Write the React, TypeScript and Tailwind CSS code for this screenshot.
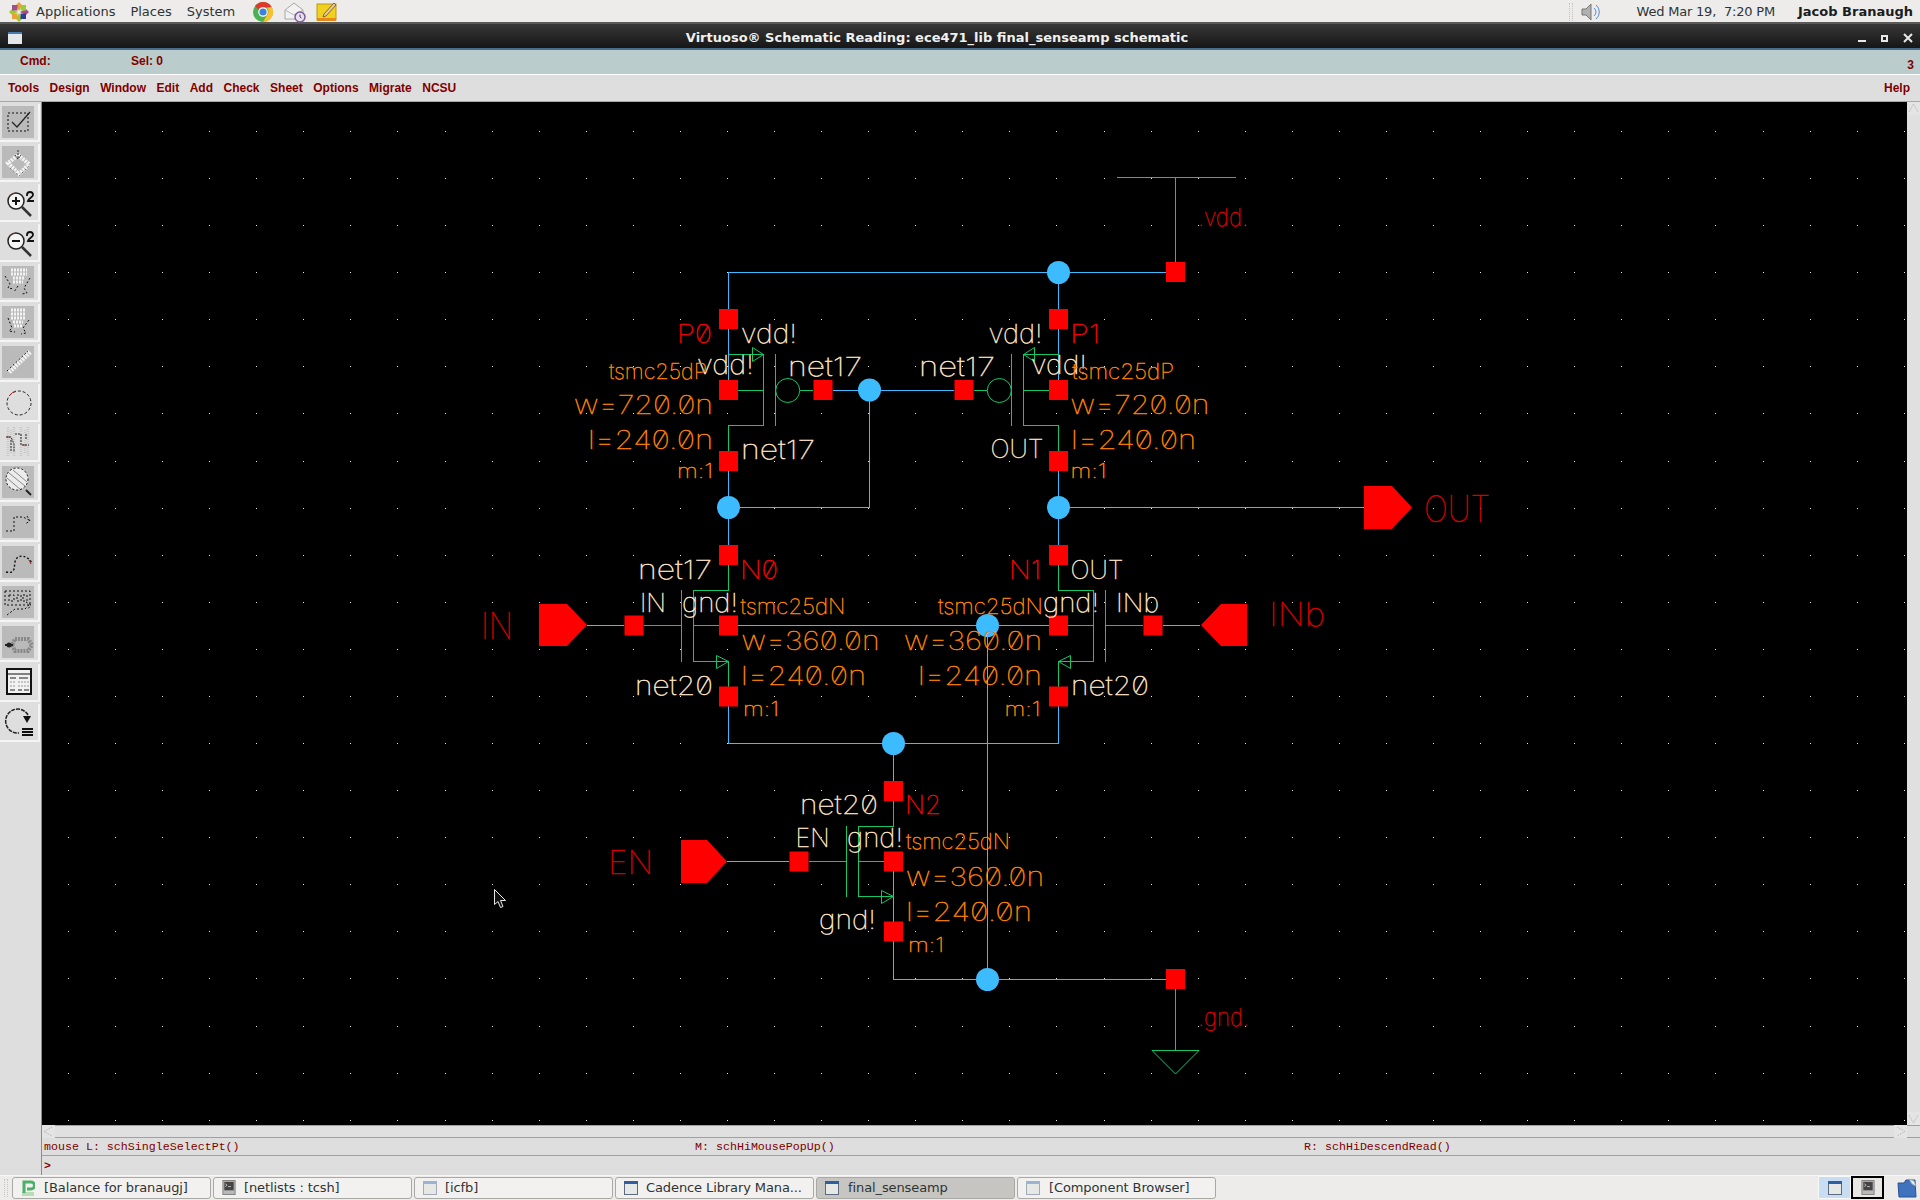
import type { ReactNode } from "react";

const BLUE = "#3cbcff";
const GREEN = "#10c868";
const RED = "#ff0000";
const PIN = "#d80000";
const CREAM = "#ffe4c4";
const ORANGE = "#ff8000";

// page coordinates; the svg viewBox starts at the canvas origin
const blueWires = [
  "728.5,309 728.5,272.5 1166,272.5",
  "1058.5,272.5 1058.5,309",
  "728.5,329 728.5,380",
  "1058.5,329 1058.5,380",
  "728.5,471 728.5,545",
  "1058.5,471 1058.5,545",
  "833,390.5 954,390.5",
  "869.5,390 869.5,507.5 728.5,507.5",
  "1058.5,507.5 1364,507.5",
  "738,625.5 1049,625.5",
  "1163,625.5 1200,625.5",
  "587,625.5 624,625.5",
  "728.5,706 728.5,743.5 1058.5,743.5 1058.5,706",
  "893.5,743 893.5,781",
  "987.5,625 987.5,979",
  "893.5,871 893.5,922",
  "893.5,941 893.5,979.5 1166,979.5",
  "727,861.5 789,861.5",
];

const greenWires = [
  // vdd / gnd stubs
  "1175.5,263 1175.5,177",
  "1117,177.5 1236,177.5",
  "1175.5,989 1175.5,1050",
  // P0
  "728.5,354.5 763.5,354.5 763.5,425.5 728.5,425.5 728.5,451",
  "738,390.5 763.5,390.5",
  "775.5,354 775.5,426",
  "800,390.5 813,390.5",
  // P1
  "1058.5,354.5 1023.5,354.5 1023.5,425.5 1058.5,425.5 1058.5,451",
  "1049,390.5 1023.5,390.5",
  "1011.5,354 1011.5,426",
  "974,390.5 987,390.5",
  // N0
  "728.5,565 728.5,590.5 693.5,590.5 693.5,661.5 728.5,661.5 728.5,687",
  "693.5,625.5 719,625.5",
  "681.5,590 681.5,662",
  "644,625.5 681.5,625.5",
  // N1
  "1058.5,565 1058.5,590.5 1093.5,590.5 1093.5,661.5 1058.5,661.5 1058.5,687",
  "1093.5,625.5 1068,625.5",
  "1105.5,590 1105.5,662",
  "1143,625.5 1105.5,625.5",
  // N2
  "893.5,801 893.5,826.5 858.5,826.5 858.5,896.5 893.5,896.5",
  "858.5,861.5 884,861.5",
  "846.5,826 846.5,897",
  "809,861.5 846.5,861.5",
];

const arrows = [
  "752.5,347.5 763.5,354.5 752.5,361.5",
  "1034.5,347.5 1023.5,354.5 1034.5,361.5",
  "716.5,655.5 728.5,661.5 716.5,668.5",
  "1070.5,655.5 1058.5,661.5 1070.5,668.5",
  "881.5,890.5 893.5,896.5 881.5,903.5",
  "1152,1050.5 1199,1050.5 1175.5,1074",
];

const squares = [
  [1175.5, 272], [728.5, 319], [728.5, 390], [728.5, 461], [823, 390], [964, 390],
  [1058.5, 319], [1058.5, 390], [1058.5, 461], [728.5, 555], [728.5, 625.5], [728.5, 696.5],
  [634, 625.5], [1058.5, 555], [1058.5, 625.5], [1058.5, 696.5], [1153, 625.5],
  [893.5, 791], [893.5, 861.5], [893.5, 931.5], [799, 861.5], [1175.5, 979],
];

const junctions = [
  [1058.5, 272.5], [869.5, 390], [728.5, 507.5], [1058.5, 507.5],
  [987.5, 625.5], [893.5, 743.5], [987.5, 979.5],
];

const pins = [
  "539,604 567,604 587,625 567,646 539,646",
  "1364,486 1392,486 1412,507.5 1392,529 1364,529",
  "1247,604 1221,604 1201,625 1221,646 1247,646",
  "681,840 707,840 727,861.5 707,883 681,883",
];

// text, x, baseline, width, font size, colour
const labels: [string, number, number, number, number, string][] = [
  [".vdd.", 1198, 226, 50, 24, PIN],
  [".gnd.", 1198, 1026, 51, 24, PIN],
  ["OUT", 1424, 522, 66, 36, PIN],
  ["IN", 481, 639, 32, 36, PIN],
  ["INb", 1269, 626, 56, 33, PIN],
  ["EN", 608, 874, 45, 33, PIN],

  ["P0", 677, 342.7, 35, 26, RED],
  ["P1", 1070, 342.7, 30, 26, RED],
  ["N0", 740, 579, 38, 26, RED],
  ["N1", 1009, 579, 32, 26, RED],
  ["N2", 905, 814.3, 36, 26, RED],

  ["vdd!", 741, 342.7, 56, 26, CREAM],
  ["vdd!", 697, 374, 57, 26, CREAM],
  ["net17", 788, 376, 74, 26, CREAM],
  ["net17", 919, 376, 76, 26, CREAM],
  ["net17", 741, 459, 74, 26, CREAM],
  ["vdd!", 988.5, 342.7, 54, 26, CREAM],
  ["vdd!", 1031, 374, 56, 26, CREAM],
  ["OUT", 990.5, 458.3, 53, 26, CREAM],
  ["net17", 638, 579, 74, 26, CREAM],
  ["IN", 640, 611.7, 26, 26, CREAM],
  ["gnd!", 682, 611.7, 56, 26, CREAM],
  ["net20", 635, 694.7, 78, 26, CREAM],
  ["OUT", 1070.5, 579, 53, 26, CREAM],
  ["gnd!", 1043, 611.7, 56, 26, CREAM],
  ["INb", 1116, 611.7, 43, 26, CREAM],
  ["net20", 1071, 694.7, 78, 26, CREAM],
  ["net20", 800, 814.3, 78, 26, CREAM],
  ["EN", 795.5, 847.3, 34, 26, CREAM],
  ["gnd!", 847, 847.3, 56, 26, CREAM],
  ["gnd!", 819, 929, 57, 26, CREAM],

  ["tsmc25dP", 609, 379, 98, 21, ORANGE],
  ["w=720.0n", 574, 414, 139, 26, ORANGE],
  ["l=240.0n", 588, 449.3, 125, 26, ORANGE],
  ["m:1", 677, 478.3, 36, 20, ORANGE],
  ["tsmc25dP", 1072, 379, 102, 21, ORANGE],
  ["w=720.0n", 1070.5, 414, 139, 26, ORANGE],
  ["l=240.0n", 1071, 449.3, 125, 26, ORANGE],
  ["m:1", 1070.5, 478.3, 36, 20, ORANGE],
  ["tsmc25dN", 740.5, 613.7, 105, 21, ORANGE],
  ["w=360.0n", 741.5, 650, 138, 26, ORANGE],
  ["l=240.0n", 741, 685, 125, 26, ORANGE],
  ["m:1", 743, 716, 36, 20, ORANGE],
  ["tsmc25dN", 938, 613.7, 105, 21, ORANGE],
  ["w=360.0n", 904, 650, 138, 26, ORANGE],
  ["l=240.0n", 918, 685, 124, 26, ORANGE],
  ["m:1", 1004.5, 716, 36, 20, ORANGE],
  ["tsmc25dN", 906, 849.3, 104, 21, ORANGE],
  ["w=360.0n", 906, 886, 138, 26, ORANGE],
  ["l=240.0n", 906, 921, 126, 26, ORANGE],
  ["m:1", 908, 951.7, 36, 20, ORANGE],
];

const gridX = Array.from({ length: 40 }, (_, i) => Math.round(68 + i * 47.07));
const gridY = Array.from({ length: 22 }, (_, i) => Math.round(131 + i * 47.08));

function Schematic() {
  return (
    <svg viewBox="42 102 1865 1023" className="block h-[1023px] w-[1865px] bg-black">
      {gridX.map((x) =>
        gridY.map((y) => <rect key={`${x}-${y}`} x={x} y={y} width={1} height={1} fill="#e8e8e8" />),
      )}
      <g fill="none" strokeWidth={1} shapeRendering="crispEdges">
        {blueWires.map((p) => (
          <polyline key={p} points={p} stroke={BLUE} />
        ))}
        {greenWires.map((p) => (
          <polyline key={p} points={p} stroke={GREEN} />
        ))}
      </g>
      <g fill="none" stroke={GREEN}>
        {arrows.map((p) => (
          <polygon key={p} points={p} />
        ))}
        <circle cx={787.7} cy={390.5} r={12} />
        <circle cx={999.3} cy={390.5} r={12} />
      </g>
      {pins.map((p) => (
        <polygon key={p} points={p} fill={RED} />
      ))}
      {squares.map(([x, y]) => (
        <rect key={`${x}-${y}`} x={x - 9.5} y={y - 10} width={19} height={20} fill={RED} />
      ))}
      {junctions.map(([x, y]) => (
        <circle key={`${x}-${y}`} cx={x} cy={y} r={11.5} fill={BLUE} />
      ))}
      <g className="font-['Inter'] font-thin [font-feature-settings:'zero']">
        {labels.map(([t, x, y, w, size, color]) => (
          <text
            key={`${t}-${x}-${y}`}
            x={x}
            y={y}
            fontSize={size}
            fill={color}
            stroke={color}
            strokeWidth={0.45}
            textLength={w}
            lengthAdjust="spacingAndGlyphs"
          >
            {t}
          </text>
        ))}
      </g>
      <path d="M494.5 889.5v15l3.5-3 2.5 6 2.5-1-2.5-6h5z" fill="#111" stroke="#e8e8e8" />
    </svg>
  );
}

function CentosLogo() {
  return (
    <svg viewBox="0 0 22 22" className="h-[22px] w-[22px]">
      <path d="M11 1l3 3-3 6-3-6z" fill="#e9a23b" />
      <path d="M21 11l-3 3-6-3 6-3z" fill="#a14f8c" />
      <path d="M11 21l-3-3 3-6 3 6z" fill="#9ccd2a" />
      <path d="M1 11l3-3 6 3-6 3z" fill="#9ccd2a" />
      <rect x="4" y="4" width="5.5" height="5.5" fill="#a14f8c" />
      <rect x="12.5" y="4" width="5.5" height="5.5" fill="#9ccd2a" />
      <rect x="4" y="12.5" width="5.5" height="5.5" fill="#e9a23b" />
      <rect x="12.5" y="12.5" width="5.5" height="5.5" fill="#2f3f8f" />
    </svg>
  );
}

function ChromeIcon() {
  return (
    <svg viewBox="0 0 22 22" className="h-[22px] w-[22px]">
      <circle cx="11" cy="11" r="10" fill="#4caf50" />
      <path d="M11 1a10 10 0 0 1 8.7 5H11a5 5 0 0 0-4.6 3L3.2 4.8A10 10 0 0 1 11 1z" fill="#e0392b" />
      <path d="M19.7 6A10 10 0 0 1 11 21l4.3-7.5A5 5 0 0 0 15 7z" fill="#fbc02d" />
      <circle cx="11" cy="11" r="4.8" fill="#fff" />
      <circle cx="11" cy="11" r="3.6" fill="#3f80d8" />
    </svg>
  );
}

function MailClockIcon() {
  return (
    <svg viewBox="0 0 22 22" className="h-[22px] w-[22px]">
      <path d="M1 9l9-7 9 7v9H1z" fill="#f2f2f2" stroke="#a8a8a8" />
      <path d="M1 9l9 5 9-5" fill="none" stroke="#b8b8b8" />
      <circle cx="16" cy="16" r="5" fill="#e8e0ee" stroke="#7d5a96" strokeWidth="1.5" />
      <path d="M16 13.5V16l1.5 1" fill="none" stroke="#55406a" />
    </svg>
  );
}

function NoteIcon() {
  return (
    <svg viewBox="0 0 22 22" className="h-[22px] w-[22px]">
      <rect x="1" y="3" width="19" height="16" fill="#f0d21e" stroke="#b89a10" />
      <rect x="1" y="17" width="19" height="3" fill="#e58a1a" />
      <path d="M8 13l10-11 2 2-10 11-3 1z" fill="#e8c9a0" stroke="#6b4a22" strokeWidth="0.8" />
    </svg>
  );
}

function WindowIcon({ active = false, className = "" }: { active?: boolean; className?: string }) {
  return (
    <svg viewBox="0 0 14 14" className={`h-[14px] w-[14px] ${className}`}>
      <rect x="0.5" y="0.5" width="13" height="13" fill="#e6e8e6" stroke={active ? "#5b6a80" : "#a0aab8"} />
      <rect x="0" y="0" width="14" height="3" fill={active ? "#2f5f9f" : "#9cb4d4"} />
    </svg>
  );
}

function TerminalIcon() {
  return (
    <svg viewBox="0 0 14 16" className="h-[15px] w-[14px]">
      <rect x="0.5" y="0.5" width="13" height="15" fill="#b8b8b8" stroke="#808080" />
      <rect x="2" y="2" width="10" height="9" fill="#444" />
      <path d="M3 4l2 1.5L3 7M6 7h3" fill="none" stroke="#ddd" strokeWidth="0.8" />
    </svg>
  );
}

function BalanceIcon() {
  return (
    <svg viewBox="0 0 14 16" className="h-[16px] w-[14px]">
      <rect x="1" y="12" width="12" height="4" fill="#b6dcb8" />
      <path d="M3 13V2h7a3 3 0 0 1 0 7H6" fill="none" stroke="#4caf6a" strokeWidth="3" />
    </svg>
  );
}

const TASKS: { title: string; icon: ReactNode; active?: boolean; gap: string }[] = [
  { title: "[Balance for branaugj]", icon: <BalanceIcon />, gap: "gap-[9px]" },
  { title: "[netlists : tcsh]", icon: <TerminalIcon />, gap: "gap-[8px]" },
  { title: "[icfb]", icon: <WindowIcon />, gap: "gap-[8px]" },
  { title: "Cadence Library Mana...", icon: <WindowIcon active />, gap: "gap-[8px]" },
  { title: "final_senseamp", icon: <WindowIcon active />, active: true, gap: "gap-[9px]" },
  { title: "[Component Browser]", icon: <WindowIcon />, gap: "gap-[9px]" },
];

const MENUS = ["Tools", "Design", "Window", "Edit", "Add", "Check", "Sheet", "Options", "Migrate", "NCSU"];

const dash = { fill: "none", stroke: "#111", strokeDasharray: "2 2" };
const hatch = { fill: "none", stroke: "#f4f4f4", strokeDasharray: "2 1", strokeWidth: 1.5 };

function Magnifier({ minus = false }: { minus?: boolean }) {
  return (
    <>
      <circle cx="14" cy="15" r="8" fill="#f4f4f4" stroke="#222" strokeWidth="1.5" />
      <path d="M8 10a8 8 0 0 1 6-3" fill="none" stroke="#a02020" />
      <path d="M10 15h8" stroke="#111" strokeWidth="2" />
      {!minus && <path d="M14 11v8" stroke="#111" strokeWidth="2" />}
      <path d="M20 21l9 9" stroke="#333" strokeWidth="2.5" />
      <path d="M25 10V9a3 3 0 1 1 6 0c0 2-4 3-5 6h6" fill="none" stroke="#111" strokeWidth="1.8" />
    </>
  );
}

const TOOLS: { gray: boolean; icon: ReactNode }[] = [
  {
    gray: true,
    icon: (
      <>
        <rect x="6" y="7" width="20" height="18" {...dash} />
        <path d="M10 16l5 5 13-15" fill="none" stroke="#222" strokeWidth="1.2" />
      </>
    ),
  },
  {
    gray: true,
    icon: (
      <>
        <path d="M16 9l11 9-10 10L6 17z" {...hatch} strokeWidth={4} />
        <path d="M16 4v8M13 9l3 4 3-4" fill="none" stroke="#333" strokeDasharray="2 1" />
        <path d="M8 22l9 8 11-11" {...dash} stroke="#777" />
      </>
    ),
  },
  { gray: false, icon: <Magnifier /> },
  { gray: false, icon: <Magnifier minus /> },
  {
    gray: true,
    icon: (
      <>
        <path d="M9 4h16M9 8h16M11 12h12M11 16h10" {...hatch} strokeWidth={3} />
        <path d="M3 10l5 8-2 4 6 1M28 12l-6 10 3 5-5 1M16 20l-4 6" {...dash} />
      </>
    ),
  },
  {
    gray: true,
    icon: (
      <>
        <path d="M9 4h14M9 8h14M9 12h14M11 16h10M12 20h8" {...hatch} strokeWidth={3} />
        <path d="M6 12l4 10-3 3 6 1M27 14l-6 8 3 5-5 1" {...dash} />
      </>
    ),
  },
  {
    gray: true,
    icon: (
      <>
        <path d="M7 26L28 6" stroke="#f4f4f4" strokeWidth="5" strokeDasharray="2 1" />
        <path d="M5 25l21-20" {...dash} />
      </>
    ),
  },
  {
    gray: false,
    icon: (
      <>
        <circle cx="17" cy="17" r="12" fill="none" stroke="#222" strokeDasharray="3 2" />
        <path d="M8 9a12 12 0 0 1 6-4" fill="none" stroke="#a02020" />
      </>
    ),
  },
  {
    gray: false,
    icon: (
      <>
        <path d="M6 1v30M12 1v30M19 1v30M26 1v30M9 4v24M23 4v24" fill="none" stroke="#c8c8c8" strokeWidth="2.5" strokeDasharray="1 1" />
        <path d="M4 11h5l3 7v8M13 8h6v11M20 19h7M24 8v5M9 14v12" fill="none" stroke="#222" strokeDasharray="2 1" />
        <path d="M5 11h3M21 19h3" stroke="#a02020" />
      </>
    ),
  },
  {
    gray: true,
    icon: (
      <>
        <circle cx="15" cy="13" r="11" fill="#ececec" />
        <path d="M7 7l16 13M5 12l14 12M11 4l14 12" stroke="#888" />
        <circle cx="15" cy="13" r="11" {...dash} />
        <path d="M24 24l5 5" stroke="#222" strokeWidth="2" />
      </>
    ),
  },
  {
    gray: true,
    icon: <path d="M4 25h8V11h9l8 4M25 10l3 5-5 3" {...dash} />,
  },
  {
    gray: true,
    icon: (
      <>
        <path d="M4 26c5 1 7 0 8-3s0-8 3-11 10-3 15 5" {...dash} strokeWidth={1.4} />
        <path d="M27 14l2 4" stroke="#a02020" />
      </>
    ),
  },
  {
    gray: true,
    icon: (
      <>
        <rect x="3" y="5" width="25" height="14" {...dash} />
        <path d="M7 9h5v6H7zM15 9h4v6h-4zM21 9h4v6h-4z" {...dash} />
        <path d="M5 29l8-6h10l5-5M24 16l5 3-3 4" {...dash} />
      </>
    ),
  },
  {
    gray: true,
    icon: (
      <>
        <path d="M13 13h13l4 6-4 6H13l-3-6z" fill="none" stroke="#888" strokeDasharray="2 1" strokeWidth="4" />
        <path d="M3 19h3M9 19h2" stroke="#222" strokeWidth="2" />
        <circle cx="7" cy="19" r="2.5" fill="#222" />
      </>
    ),
  },
  {
    gray: false,
    icon: (
      <>
        <rect x="5" y="3" width="24" height="25" fill="#f2f2f2" stroke="#111" strokeWidth="2" />
        <path d="M5 8h24" stroke="#111" />
        <path d="M8 12h6M17 12h9M8 24h5M16 24h4M22 24h5" stroke="#888" strokeWidth="2" />
        <path d="M8 16h5M16 16h11M8 20h5M16 20h11" stroke="#999" strokeDasharray="2 1" />
      </>
    ),
  },
  {
    gray: false,
    icon: (
      <>
        <path d="M26 9A12 12 0 1 0 17 27" fill="none" stroke="#222" strokeWidth="1.5" strokeDasharray="4 1" />
        <path d="M21 10h8l-4 7z" fill="#111" />
        <path d="M20 23h11M20 26h11M20 29h11" stroke="#111" strokeWidth="2" />
      </>
    ),
  },
];

function ToolButton({ gray, children }: { gray: boolean; children: ReactNode }) {
  return (
    <div className="flex h-[38px] w-[40px] items-center justify-center border-b-2 border-r-2 border-[#f4f4f4] bg-[#dedede] pr-[3px]">
      <div className={`h-[32px] w-[32px] ${gray ? "bg-[#bababa]" : ""}`}>
        <svg viewBox="0 0 32 32" className="block h-[32px] w-[32px]">
          {children}
        </svg>
      </div>
    </div>
  );
}

function ScrollArrow({ dir }: { dir: "up" | "down" | "left" | "right" }) {
  const d = { up: "M2 10L6.5 2 11 10", down: "M2 3l4.5 8L11 3", left: "M10 2L2 6.5l8 4.5", right: "M3 2l8 4.5L3 11" }[dir];
  return (
    <svg viewBox="0 0 13 13" className="block h-[13px] w-[13px] bg-[#e4e4e4]">
      <path d={d} fill="none" stroke="#b0b0b0" strokeDasharray="1 1" />
    </svg>
  );
}

export default function App() {
  return (
    <div className="flex h-[1200px] w-[1920px] flex-col overflow-hidden bg-[#dedede] font-['DejaVu_Sans',sans-serif]">
      {/* GNOME top panel */}
      <header className="flex h-[24px] items-center border-b-2 border-[#5a5a5a] bg-[#edecea] pt-[1px] text-[13px] text-[#2e3436]">
        <div className="ml-[8px] mr-[6px]">
          <CentosLogo />
        </div>
        <span>Applications</span>
        <span className="ml-[15px]">Places</span>
        <span className="ml-[15px]">System</span>
        <div className="ml-[17px] flex gap-[10px]">
          <ChromeIcon />
          <MailClockIcon />
          <NoteIcon />
        </div>
        <div className="ml-auto flex items-center">
          <div className="mr-[8px] h-[18px] w-[4px] border-x border-dotted border-[#c4c4c4]" />
          <svg viewBox="0 0 20 20" className="h-[20px] w-[20px]">
            <path d="M1 7h4l5-5v16l-5-5H1z" fill="#b0b0b0" stroke="#777" />
            <path d="M13 6a5 5 0 0 1 0 8M15 3a9 9 0 0 1 0 14" fill="none" stroke="#5b8fd0" />
          </svg>
          <span className="ml-[36px] whitespace-pre tracking-[-0.2px]">Wed Mar 19,  7:20 PM</span>
          <span className="ml-[23px] mr-[7px] font-bold text-[#1c1c1c]">Jacob Branaugh</span>
        </div>
      </header>

      {/* window title */}
      <div className="relative flex h-[26px] items-center justify-center border-b-2 border-[#4a6c8c] bg-gradient-to-b from-[#383838] to-[#161616] pr-[46px] pt-[4px] text-[13px] font-bold text-[#f0f0f0]">
        <svg viewBox="0 0 14 12" className="absolute left-[8px] top-[8px] h-[12px] w-[14px]">
          <rect width="14" height="12" fill="#e4e8e8" />
          <rect width="14" height="2" fill="#4a78b0" />
        </svg>
        Virtuoso® Schematic Reading: ece471_lib final_senseamp schematic
        <div className="absolute right-[7px] top-[9px] flex items-center gap-[15px]">
          <span className="mt-[6px] h-[2px] w-[8px] bg-[#e8e8e8]" />
          <span className="h-[7px] w-[7px] border-2 border-[#e8e8e8]" />
          <svg viewBox="0 0 10 10" className="h-[10px] w-[10px]">
            <path d="M1 1l8 8M9 1l-8 8" stroke="#e8e8e8" strokeWidth="2" />
          </svg>
        </div>
      </div>

      {/* status strip */}
      <div className="flex h-[24px] items-center bg-[#bbcccc] pb-[2px] font-['Liberation_Sans',sans-serif] text-[12px] font-bold text-[#800000]">
        <span className="ml-[20px] w-[111px]">Cmd:</span>
        <span>Sel: 0</span>
        <span className="ml-auto mr-[6px] mt-[8px]">3</span>
      </div>

      {/* menu bar */}
      <nav className="flex h-[28px] items-center gap-[10.5px] border-y border-t-white border-b-[#a8a8a8] bg-[#dedede] pl-[8px] pr-[10px] font-['Liberation_Sans',sans-serif] text-[12px] font-bold text-[#800000]">
        {MENUS.map((m) => (
          <span key={m}>{m}</span>
        ))}
        <span className="ml-auto">Help</span>
      </nav>

      <div className="flex flex-1">
        {/* tool palette */}
        <aside className="flex w-[42px] flex-col gap-[2px] border-r border-[#8c8c8c] bg-[#dedede] pt-[2px]">
          {TOOLS.map((t, i) => (
            <ToolButton key={i} gray={t.gray}>
              {t.icon}
            </ToolButton>
          ))}
        </aside>

        <div className="flex flex-1 flex-col">
          <div className="flex h-[1023px]">
            <Schematic />
            <div className="flex w-[13px] flex-col justify-between bg-[#e0e0e0]">
              <ScrollArrow dir="up" />
              <ScrollArrow dir="down" />
            </div>
          </div>

          {/* horizontal scrollbar */}
          <div className="flex h-[13px] items-center justify-between border-y border-[#a0a0a0] bg-[#e0e0e0]">
            <ScrollArrow dir="left" />
            <div className="mr-[13px]">
              <ScrollArrow dir="right" />
            </div>
          </div>

          {/* mouse bindings */}
          <div className="grid h-[18px] grid-cols-[651px_609px_1fr] items-center border-b border-[#a0a0a0] pl-[2px] font-['Liberation_Mono',monospace] text-[11.65px] text-[#800000]">
            <span>mouse L: schSingleSelectPt()</span>
            <span>M: schHiMousePopUp()</span>
            <span>R: schHiDescendRead()</span>
          </div>

          {/* command prompt */}
          <div className="flex h-[19px] items-center pl-[2px] font-['Liberation_Mono',monospace] text-[11.5px] font-bold text-[#800000]">
            &gt;
          </div>
        </div>
      </div>

      {/* window list panel */}
      <footer className="flex h-[25px] items-center border-t border-[#f6f6f6] bg-[#edecea] pb-[1px] text-[13px] tracking-[-0.1px] text-[#2e3436]">
        <div className="ml-[4px] mr-[4px] h-[18px] w-[4px] border-x border-dotted border-[#c4c4c4]" />
        <div className="flex gap-[2px]">
          {TASKS.map((t) => (
            <div
              key={t.title}
              className={`flex h-[22px] w-[199px] items-center rounded-[3px] border border-[#a8a8a4] pl-[8px] ${t.gap} ${
                t.active ? "bg-[#c6c5c1]" : "bg-[#f2f1ef]"
              }`}
            >
              {t.icon}
              <span className="whitespace-nowrap">{t.title}</span>
            </div>
          ))}
        </div>
        <div className="ml-auto flex items-center">
          <div className="flex h-[23px] w-[33px] items-center justify-center border border-[#f8f8f8] bg-[#c8dcf2]">
            <WindowIcon active />
          </div>
          <div className="flex h-[23px] w-[33px] items-center justify-center border-2 border-black bg-[#e8e7e4]">
            <TerminalIcon />
          </div>
          <svg viewBox="0 0 20 20" className="ml-[13px] mr-[3px] h-[20px] w-[20px]">
            <path d="M1 5h6l2-3h9l1 17H2z" fill="#3f73bd" stroke="#2a5290" />
            <path d="M12 1l5 2 2 5-4-2z" fill="#e8eef6" stroke="#9ab" />
          </svg>
        </div>
      </footer>
    </div>
  );
}
